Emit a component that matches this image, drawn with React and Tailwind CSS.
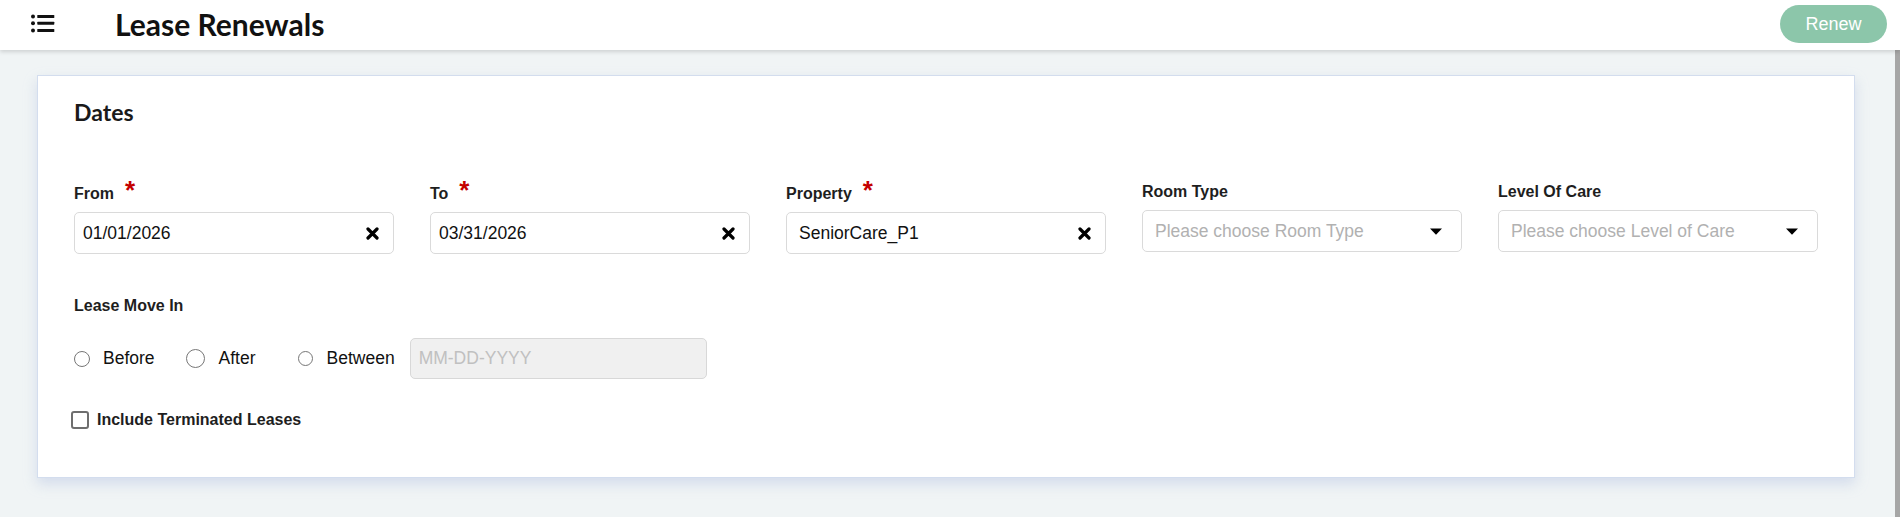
import React from "react";

const arial = { fontFamily: '"Liberation Sans", Arial, sans-serif' };

function XIcon() {
  return (
    <svg width="13" height="13" viewBox="0 0 13 13" className="shrink-0">
      <path d="M2 2 L11 11 M11 2 L2 11" stroke="#000" strokeWidth="3.2" strokeLinecap="round" />
    </svg>
  );
}

function Caret() {
  return (
    <svg width="12" height="7" viewBox="0 0 12 7" className="shrink-0">
      <path d="M0 0.5 L12 0.5 L6 6.8 Z" fill="#000" />
    </svg>
  );
}

function Label({ text, required }) {
  return (
    <div className={`flex items-start h-[18px] mb-[9px] ${required ? "mt-[2px]" : ""}`}>
      <span className="text-[16px] leading-[18px] font-bold text-[#1e1e1e]">{text}</span>
      {required && (
        <span className="ml-[11px] text-[26px] leading-[18px] font-bold text-[#c40000] -mt-[4px] h-[18px]">*</span>
      )}
    </div>
  );
}

function TextField({ label, value, required, pad }) {
  return (
    <div className="flex flex-col">
      <Label text={label} required={required} />
      <div className={`h-[42px] bg-white border border-[#dadada] rounded-[5px] flex items-center ${pad} pr-[14px]`}>
        <span className="flex-1 text-[17.5px] text-[#111]">{value}</span>
        <XIcon />
      </div>
    </div>
  );
}

function SelectField({ label, placeholder }) {
  return (
    <div className="flex flex-col">
      <Label text={label} />
      <div className="h-[42px] bg-white border border-[#dadada] rounded-[5px] flex items-center pl-[12px] pr-[19px]">
        <span className="flex-1 text-[17.5px] text-[#b1b1b1]">{placeholder}</span>
        <Caret />
      </div>
    </div>
  );
}

function Radio({ size }) {
  return <span className={`${size} rounded-full border border-[#767676] bg-white shrink-0`} />;
}

export default function App() {
  return (
    <div className="w-[1900px] h-[517px] bg-[#f0f4f5] flex flex-col overflow-hidden" style={arial}>
      <header className="h-[50px] pb-[3px] bg-white flex items-center relative z-10 shadow-[0_2px_4px_rgba(0,0,0,0.14)] shrink-0">
        <svg width="24" height="19" viewBox="0 0 24 19" className="ml-[31px]">
          <circle cx="2" cy="2.5" r="2" fill="#111" />
          <circle cx="2" cy="9.2" r="2" fill="#111" />
          <circle cx="2" cy="16.5" r="2" fill="#111" />
          <rect x="6.3" y="1" width="17" height="3" rx="0.6" fill="#111" />
          <rect x="6.3" y="7.7" width="17" height="3" rx="0.6" fill="#111" />
          <rect x="6.3" y="15" width="17" height="3" rx="0.6" fill="#111" />
        </svg>
        <h1
          className="ml-[60px] text-[30px] font-bold text-[#111] leading-none"
          style={{ fontFamily: 'Lato, "Open Sans", sans-serif' }}
        >
          Lease Renewals
        </h1>
        <button className="ml-auto mr-[13px] self-start mt-[5px] w-[107px] h-[38px] rounded-full bg-[#8cc6aa] text-white text-[18px]">
          Renew
        </button>
      </header>
      <div className="flex flex-1">
        <main className="flex-1 pt-[25px] pl-[37px] pr-[40px]">
          <section className="bg-white border border-[#d3ddee] shadow-[0_6px_12px_rgba(170,186,222,0.4)] px-[36px] pt-[23px] pb-[48px]">
            <h2
              className="text-[23px] font-bold text-[#1a1a1a] leading-[26px]"
              style={{ fontFamily: 'Lato, "Open Sans", sans-serif' }}
            >
              Dates
            </h2>
            <div className="grid grid-cols-5 gap-x-[36px] mt-[58px] items-start">
              <TextField label="From" value="01/01/2026" required pad="pl-[8px]" />
              <TextField label="To" value="03/31/2026" required pad="pl-[8px]" />
              <TextField label="Property" value="SeniorCare_P1" required pad="pl-[12px]" />
              <SelectField label="Room Type" placeholder="Please choose Room Type" />
              <SelectField label="Level Of Care" placeholder="Please choose Level of Care" />
            </div>
            <div className="mt-[43px] text-[16px] leading-[17px] font-bold text-[#1e1e1e]">Lease Move In</div>
            <div className="mt-[24px] flex items-center h-[41px] text-[17.5px] text-[#111]">
              <Radio size="w-[16px] h-[16px]" />
              <span className="ml-[13px]">Before</span>
              <span className="ml-[31px]">
                <Radio size="w-[19px] h-[19px] block" />
              </span>
              <span className="ml-[14px]">After</span>
              <span className="ml-[42px]">
                <Radio size="w-[15px] h-[15px] block" />
              </span>
              <span className="ml-[14px]">Between</span>
              <div className="ml-[15px] w-[297px] h-[41px] bg-[#f0f0f0] border border-[#d8d8d8] rounded-[5px] flex items-center pl-[8px] text-[#c0c0c0]">
                MM-DD-YYYY
              </div>
            </div>
            <div className="mt-[32px] flex items-center">
              <span className="w-[18px] h-[18px] rounded-[3px] border-2 border-[#6e6e6e] bg-white -ml-[3px]" />
              <span className="ml-[8px] text-[16px] leading-[18px] font-bold text-[#1e1e1e]">Include Terminated Leases</span>
            </div>
          </section>
        </main>
        <div className="w-[5px] bg-[#a6a6a6]" />
      </div>
    </div>
  );
}
